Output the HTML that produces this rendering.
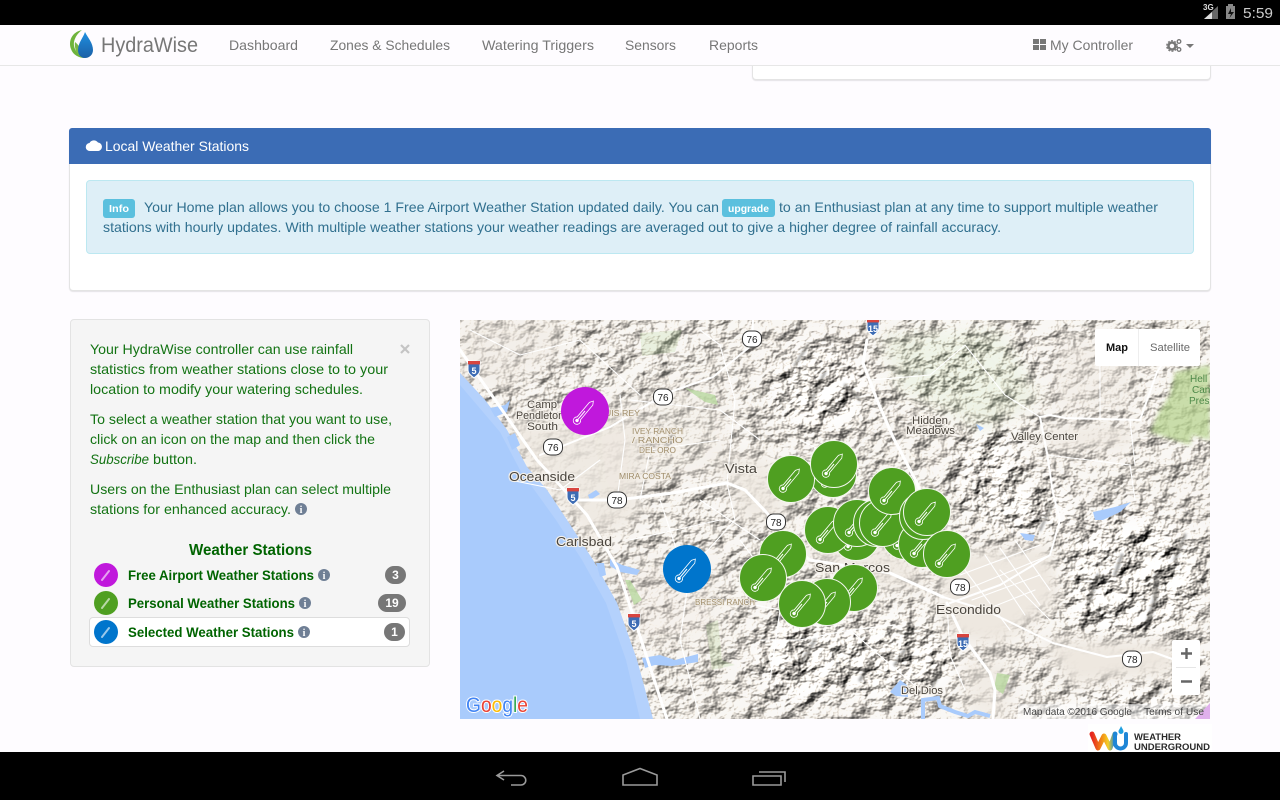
<!DOCTYPE html>
<html lang="en"><head><meta charset="utf-8"><title>HydraWise</title>
<style>
html,body{margin:0;padding:0;width:1280px;height:800px;overflow:hidden;background:#fefcff;font-family:"Liberation Sans",sans-serif}
.a{position:absolute;box-sizing:border-box}
svg{position:absolute;overflow:hidden}
#over text{font-family:"Liberation Sans",sans-serif}
#map text{font-family:"Liberation Sans",sans-serif}
.l{fill:#4a453e;stroke:#f4f0ea;stroke-width:2.2px;paint-order:stroke;stroke-linejoin:round}
.t{fill:#a08e6c;font-size:8px;stroke:#f1ece4;stroke-width:1.5px;paint-order:stroke}
</style></head><body>
<div class="a" style="left:0;top:0;width:1280px;height:25px;background:#000"></div>
<div class="a" style="left:752px;top:60px;width:459px;height:20px;background:#fff;border:1px solid #e4e4e4;border-top:0;border-radius:0 0 4px 4px;box-shadow:0 1px 1px rgba(0,0,0,.1)"></div>
<div class="a" style="left:0;top:25px;width:1280px;height:41px;background:#fefcff;border-bottom:1px solid #e7e7e7"></div>
<div class="a" style="left:69px;top:128px;width:1142px;height:163px;background:#fff;border:1px solid #e4e4e4;border-radius:4px;box-shadow:0 1px 1px rgba(0,0,0,.1)"></div>
<div class="a" style="left:69px;top:128px;width:1142px;height:36px;background:#3b6cb5;border-radius:3px 3px 0 0"></div>
<div class="a" style="left:86px;top:180px;width:1108px;height:74px;background:#deeff7;border:1px solid #bce8f1;border-radius:4px"></div>
<div class="a" style="left:103px;top:199px;width:32px;height:19px;background:#5bc0de;border-radius:3px"></div>
<div class="a" style="left:722px;top:199px;width:53px;height:18px;background:#5bc0de;border-radius:3px"></div>
<div class="a" style="left:70px;top:319px;width:360px;height:348px;background:#f5f5f5;border:1px solid #e3e3e3;border-radius:4px"></div>
<div class="a" style="left:89px;top:617px;width:321px;height:30px;background:#fff;border:1px solid #ddd;border-radius:4px"></div>
<div class="a" style="left:385px;top:566px;width:21px;height:18px;background:#777;border-radius:9px"></div>
<div class="a" style="left:378px;top:594px;width:28px;height:18px;background:#777;border-radius:9px"></div>
<div class="a" style="left:384px;top:623px;width:21px;height:18px;background:#777;border-radius:9px"></div>

<svg id="map" style="left:460px;top:320px" width="750" height="399" viewBox="460 320 750 399">
<defs>
<filter id="hill" x="0" y="0" width="100%" height="100%" color-interpolation-filters="sRGB">
<feTurbulence type="fractalNoise" baseFrequency="0.045 0.055" numOctaves="4" seed="11" result="n"/>
<feDiffuseLighting in="n" surfaceScale="6.5" diffuseConstant="1.42" lighting-color="#f0eae2"><feDistantLight azimuth="225" elevation="45"/></feDiffuseLighting>
</filter>
<filter id="b8"><feGaussianBlur stdDeviation="8"/></filter>
<filter id="b14"><feGaussianBlur stdDeviation="14"/></filter>
<filter id="b2"><feGaussianBlur stdDeviation="2"/></filter>
<filter id="b1"><feGaussianBlur stdDeviation="1"/></filter>
<mask id="tm" maskUnits="userSpaceOnUse" x="460" y="320" width="750" height="399">
<rect x="460" y="320" width="750" height="399" fill="#a4a4a4"/>
<g filter="url(#b14)" fill="#fff">
<ellipse cx="1130" cy="580" rx="75" ry="65"/><ellipse cx="890" cy="660" rx="70" ry="40"/><ellipse cx="800" cy="660" rx="45" ry="45"/><ellipse cx="820" cy="390" rx="50" ry="45"/><ellipse cx="1020" cy="510" rx="55" ry="25"/>
<ellipse cx="960" cy="370" rx="60" ry="35"/><ellipse cx="1140" cy="705" rx="70" ry="16"/><ellipse cx="990" cy="470" rx="35" ry="40"/>
</g>
<g filter="url(#b8)" fill="#000">
<path d="M935 555L1050 545 1060 600 1000 645 950 640Z"/><path d="M1040 640L1170 640 1180 672 1070 685Z" />
<path d="M1045 425L1135 425 1130 448 1050 450Z" opacity=".8"/><path d="M460 320L560 320 565 350 500 390 460 375Z" opacity=".5"/>
<path d="M500 420L640 420 640 520 590 540 530 470Z" opacity=".85"/><path d="M600 400L720 380 730 470 610 490Z" opacity=".35"/>
<path d="M720 455L770 460 790 520 740 520Z" opacity=".8"/><path d="M795 540L900 545 930 590 850 585Z" opacity=".8"/>
<path d="M1060 340L1140 340 1130 410 1050 410Z" opacity=".45"/><path d="M590 560L720 550 720 640 640 650Z" opacity=".3"/>
<path d="M960 660L1010 660 1010 719 970 719Z" opacity=".7"/>
</g>
</mask>
<g id="th"><path d="M-2.2 9.6V-9.5L0-13 2.2-9.5V9.6A3.7 3.700 0 1 1-2.2 9.6Z" fill="none" stroke="#fff" stroke-width=".8"/><path d="M0 13V0" stroke="#fff" stroke-width="1"/><circle cx="0" cy="12.4" r="1.700" fill="#fff"/></g>
<g id="g"><circle r="23.5" fill="#4f9f21" stroke="#f3f7ee" stroke-width="1"/><use href="#th" transform="rotate(40)"/></g>
<g id="s5"><path d="M-6-8H6V1C6 5 2 7 0 9-2 7-6 5-6 1Z" fill="#3d6cb4" stroke="#fff"/><rect x="-6" y="-8" width="12" height="3.4" fill="#d8453f"/></g>
<g id="sr"><rect x="-9.5" y="-8" width="19" height="16" rx="7" fill="#fff" stroke="#333" stroke-width="1"/></g>
</defs>
<rect x="460" y="320" width="750" height="399" fill="#eee8e0"/>
<g mask="url(#tm)"><rect x="460" y="320" width="750" height="399" filter="url(#hill)"/></g>
<g fill="none" stroke="#5c5a56" stroke-linecap="round" filter="url(#b1)" opacity=".6"><path d="M1147 625L1155 600 1157 575" stroke-width="4"/><path d="M1115 575L1122 555M1090 600L1098 575M1175 560L1185 535" stroke-width="3"/><path d="M895 665L905 650M860 680L872 662M930 690L940 672M802 662L815 640M1010 690L1018 672" stroke-width="3"/><path d="M812 400L825 372M845 385L860 400M1040 530L1052 505M795 365L808 345M895 372L925 373M1140 700L1160 692" stroke-width="2.500"/></g>
<g fill="#cfe0bb" opacity=".3" filter="url(#b8)"><path d="M880 335L1000 330 1040 400 985 430 900 390Z"/></g>
<g fill="#b9d592" opacity=".75"><path d="M1175 372L1210 365V440L1192 435 1190 445 1150 432 1160 410 1170 395Z" filter="url(#b2)"/></g>
<g fill="#b9d9a0" opacity=".8"><path d="M997 673L1010 675 1003 694 994 688Z"/><path d="M640 333L682 330 675 352 642 356 Z" opacity=".3"/><path d="M685 388L715 395 718 405 705 402Z"/><path d="M625 580L634 605 642 600 630 580Z"/><path d="M706 625L718 620 722 660 735 665 712 670Z" opacity=".35"/></g>
<!-- ocean -->
<path d="M460 373L485 400 507 430 527 467 547 490 567 520 593 560 617 603 637 660 653 719H460Z" fill="#a9cbfc"/>
<path d="M460 373L485 400 507 430 527 467 547 490 567 520 593 560 617 603 637 660 653 719H640L626 660 606 603 582 560 556 520 520 470 500 432 460 385Z" fill="#b4d1fc"/>
<!-- water -->
<g fill="#a9cbfc"><path d="M610 559L622 565 640 570 637 575 620 572 610 566Z"/><path d="M596 563L604 563 606 575 600 577Z"/><path d="M642 658L660 655 675 660 698 654 698 662 672 666 655 665 645 668Z"/><path d="M490 408L505 405 510 400 507 412 495 417Z"/><path d="M507 437L515 433 520 445 512 450Z"/><path d="M890 692L900 680 907 685 908 697 896 696Z"/><path d="M1093 512L1115 507 1131 502 1120 512 1103 520 1095 520Z"/><path d="M1020 533L1035 535 1033 541 1025 540Z"/><path d="M976 424L984 428 980 431Z"/><path d="M588 495L596 490 600 494 590 500Z"/></g>
<path d="M923 719V700L938 698 940 706 955 712 968 716 975 712 990 716" fill="none" stroke="#a9cbfc" stroke-width="4"/>
<!-- roads -->
<g fill="none" stroke="#fff" stroke-linecap="round" stroke-linejoin="round">
<g stroke-width="3"><path d="M867 340L863 363 877 400 893 437 917 483 930 520"/><path d="M947 603L963 637 990 673 995 690 993 719"/><path d="M460 350L493 397 537 460 587 515 617 567 637 627 667 719"/><path d="M575 500L617 500 673 493 727 483 745 490 767 513 795 548 810 560 890 573 943 597"/></g>
<g stroke-width="2"><path d="M943 597L985 610 1053 643 1107 657 1153 652 1175 660 1205 657"/><path d="M540 455L610 427 667 393 713 377 752 345 753 320"/><path d="M1040 417L1050 415 1065 418 1140 420 1157 372 1165 360"/><path d="M1040 417L1047 453 1053 493 1060 520 1050 555 1000 585 950 603"/></g>
<g stroke-width="1.100"><path d="M1047 455L1130 465 1135 500M1130 420L1135 465"/><path d="M870 380L930 375 965 345 1005 395 1040 417"/><path d="M617 500L625 440 620 395M735 400L727 483 735 520 690 570 680 640 700 719"/><path d="M947 603L950 655 965 690M1050 620L1000 570"/><path d="M895 625L850 630 800 640 760 640M850 630L920 690"/><path d="M960 575L1040 545M965 590L1050 555M972 600L1040 575M980 612L1035 590M985 555L1025 615M1000 548L1040 605M1015 540L1050 590M965 570L1010 630"/><path d="M470 330L520 355 580 340 640 395M630 400L720 410 760 440M640 500L650 450 720 440M660 500L680 560M700 500L760 540M730 600L780 610 770 680M510 480L560 490 600 460M700 330L720 345 735 400M1100 350V420M800 440L860 470M630 540L720 520M740 540L800 620"/></g>
</g>
<!-- shields -->
<g font-size="10" text-anchor="middle" fill="#222">
<use href="#sr" x="663" y="397"/><text x="663" y="401">76</text>
<use href="#sr" x="752" y="339"/><text x="752" y="343">76</text>
<use href="#sr" x="553" y="447"/><text x="553" y="451">76</text>
<use href="#sr" x="617" y="500"/><text x="617" y="504">78</text>
<use href="#sr" x="776" y="522"/><text x="776" y="526">78</text>
<use href="#sr" x="960" y="587"/><text x="960" y="591">78</text>
<use href="#sr" x="1132" y="659"/><text x="1132" y="663">78</text>
<g font-weight="bold"><use href="#s5" x="474" y="369"/><text x="474" y="374" font-size="9" fill="#fff">5</text>
<use href="#s5" x="573" y="496"/><text x="573" y="501" font-size="9" fill="#fff">5</text>
<use href="#s5" x="634" y="622"/><text x="634" y="627" font-size="9" fill="#fff">5</text>
<use href="#s5" x="873" y="327"/><text x="873" y="332" font-size="9" fill="#fff">15</text>
<use href="#s5" x="963" y="642"/><text x="963" y="647" font-size="9" fill="#fff">15</text></g>
</g>
<!-- labels -->
<g>
<text class="l" x="527" y="408" font-size="11" textLength="30" lengthAdjust="spacingAndGlyphs">Camp</text>
<text class="l" x="516" y="419" font-size="11" textLength="48" lengthAdjust="spacingAndGlyphs">Pendleton</text>
<text class="l" x="527" y="430" font-size="11" textLength="31" lengthAdjust="spacingAndGlyphs">South</text>
<text class="l" x="509" y="481" font-size="13" textLength="66" lengthAdjust="spacingAndGlyphs">Oceanside</text>
<text class="l" x="725" y="473" font-size="13" textLength="32" lengthAdjust="spacingAndGlyphs">Vista</text>
<text class="l" x="556" y="546" font-size="13" textLength="56" lengthAdjust="spacingAndGlyphs">Carlsbad</text>
<text class="l" x="912" y="424" font-size="11" textLength="36" lengthAdjust="spacingAndGlyphs">Hidden</text>
<text class="l" x="906" y="434" font-size="11" textLength="49" lengthAdjust="spacingAndGlyphs">Meadows</text>
<text class="l" x="1011" y="440" font-size="11" textLength="67" lengthAdjust="spacingAndGlyphs">Valley Center</text>
<text class="l" x="815" y="572" font-size="13" textLength="75" lengthAdjust="spacingAndGlyphs">San Marcos</text>
<text class="l" x="936" y="614" font-size="13" textLength="65" lengthAdjust="spacingAndGlyphs">Escondido</text>
<text class="l" x="901" y="694" font-size="11" textLength="42" lengthAdjust="spacingAndGlyphs">Del Dios</text>
<text class="t" x="600" y="416" textLength="40" lengthAdjust="spacingAndGlyphs">LUIS REY</text>
<text class="t" x="632" y="434" textLength="51" lengthAdjust="spacingAndGlyphs">IVEY RANCH</text>
<text class="t" x="632" y="443" textLength="51" lengthAdjust="spacingAndGlyphs">/ RANCHO</text>
<text class="t" x="639" y="453" textLength="37" lengthAdjust="spacingAndGlyphs">DEL ORO</text>
<text class="t" x="619" y="479" textLength="52" lengthAdjust="spacingAndGlyphs">MIRA COSTA</text>
<text class="t" x="695" y="605" textLength="60" lengthAdjust="spacingAndGlyphs">BRESSI RANCH</text>
<g font-size="10" fill="#4f8a4a"><text x="1190" y="382">Hell</text><text x="1192" y="393">Can</text><text x="1189" y="404">Pres</text></g>
</g>
<!-- markers -->
<circle cx="585" cy="411" r="24" fill="#c018dc"/><use href="#th" transform="translate(585 411) rotate(40)"/>
<circle cx="687" cy="569" r="24" fill="#0075cc"/><use href="#th" transform="translate(687 569) rotate(40)"/>
<use href="#g" x="833" y="474"/><use href="#g" x="791" y="479"/><use href="#g" x="834" y="464"/>
<use href="#g" x="856" y="537"/><use href="#g" x="828" y="530"/><use href="#g" x="857" y="523"/><use href="#g" x="905" y="536"/><use href="#g" x="877" y="523"/><use href="#g" x="883" y="523"/><use href="#g" x="892" y="491"/><use href="#g" x="922" y="544"/><use href="#g" x="923" y="516"/><use href="#g" x="927" y="512"/><use href="#g" x="947" y="554"/>
<use href="#g" x="783" y="554"/><use href="#g" x="763" y="578"/><use href="#g" x="854" y="588"/><use href="#g" x="827" y="602"/><use href="#g" x="802" y="604"/>
<!-- controls -->
<rect x="1095" y="329" width="105" height="37" rx="2" fill="#fff"/><path d="M1138.500 329V366" stroke="#eee"/>
<text x="1106" y="351" font-size="11" font-weight="bold" fill="#111" textLength="22" lengthAdjust="spacingAndGlyphs">Map</text>
<text x="1150" y="351" font-size="11" fill="#6a6a6a" textLength="40" lengthAdjust="spacingAndGlyphs">Satellite</text>
<rect x="1172" y="640" width="28" height="55" rx="2" fill="#fff"/><path d="M1176 667.500H1196" stroke="#e6e6e6"/>
<path d="M1181 653.500H1192M1186.500 648V659M1181 681.500H1192" stroke="#666" stroke-width="2.400" fill="none"/>
<rect x="1018" y="704" width="192" height="15" fill="#fff" opacity=".55"/><path d="M1195 719L1210 703V719Z" fill="#e0b0ec"/>
<text x="1023" y="715" font-size="10" fill="#444" textLength="109" lengthAdjust="spacingAndGlyphs">Map data ©2016 Google</text>
<text x="1144" y="715" font-size="10" fill="#444" textLength="60" lengthAdjust="spacingAndGlyphs">Terms of Use</text>
<text x="466" y="712" font-size="21" stroke="#fff" stroke-width="2" paint-order="stroke" textLength="62" lengthAdjust="spacingAndGlyphs"><tspan fill="#4285f4">G</tspan><tspan fill="#ea4335">o</tspan><tspan fill="#fbbc05">o</tspan><tspan fill="#4285f4">g</tspan><tspan fill="#34a853">l</tspan><tspan fill="#ea4335">e</tspan></text>
</svg>

<svg id="over" style="left:0;top:0" width="1280" height="800" viewBox="0 0 1280 800">
<defs><linearGradient id="wu" x1="0" x2="1" y1="0" y2="0"><stop offset="0" stop-color="#e5261f"/><stop offset=".45" stop-color="#f29216"/><stop offset=".7" stop-color="#f5cf26"/><stop offset="1" stop-color="#1f86d6"/></linearGradient>
<linearGradient id="dr" x1="0" y1="0" x2="0" y2="1"><stop offset="0" stop-color="#1e90e0"/><stop offset="1" stop-color="#1c5fa6"/></linearGradient></defs>
<!-- bars -->
<rect x="0" y="752" width="1280" height="48" fill="#000"/>
<rect x="1088" y="724" width="124" height="28" fill="#fff"/>
<g fill="none" stroke="#9a9a9a" stroke-width="1.600"><path d="M504 771L497 775.500 504 780M497 775.500H521A4 4 0 0 1 521 785H511"/><path d="M623 785V775L640 768.500 657 775V785Z"/><path d="M753 776H781V785H753ZM759 772H785V782"/></g>
<!-- status -->
<text x="1203" y="10" font-size="8" font-weight="bold" fill="#ddd">3G</text>
<path d="M1204 19L1218 6V19Z" fill="#666"/><path d="M1204 19L1212 12V19Z" fill="#ddd"/>
<rect x="1226" y="6" width="9" height="13" fill="#888"/><rect x="1228" y="4" width="5" height="2" fill="#888"/><path d="M1231 8L1228 14H1231L1229.500 18 1234 12H1231Z" fill="#111"/>
<text x="1243" y="18" font-size="15" fill="#ccc" textLength="30" lengthAdjust="spacingAndGlyphs">5:59</text>
<!-- nav -->
<path d="M82 30C72 32 68 41 71 49 73 55 79 58 85 58 78 55 73 49 74 42 75 37 78 33 82 30Z" fill="#6fb43c"/>
<path d="M75 42C79 45 82 50 82 57 77 56 74 48 75 42Z" fill="#7ab648"/>
<path d="M85 32C88 38 93 43 93 50 93 55 89 58 85 58 81 58 78 55 78 50 78 43 83 38 85 32Z" fill="url(#dr)"/>
<g fill="#777" font-size="14">
<text x="101" y="52" font-size="21" textLength="97" lengthAdjust="spacingAndGlyphs">HydraWise</text>
<text x="229" y="50" textLength="69" lengthAdjust="spacingAndGlyphs">Dashboard</text>
<text x="330" y="50" textLength="120" lengthAdjust="spacingAndGlyphs">Zones &amp; Schedules</text>
<text x="482" y="50" textLength="112" lengthAdjust="spacingAndGlyphs">Watering Triggers</text>
<text x="625" y="50" textLength="51" lengthAdjust="spacingAndGlyphs">Sensors</text>
<text x="709" y="50" textLength="49" lengthAdjust="spacingAndGlyphs">Reports</text>
<text x="1050" y="50" textLength="83" lengthAdjust="spacingAndGlyphs">My Controller</text>
<path d="M1033 39h6v5h-6zM1040 39h6v5h-6zM1033 45h6v5h-6zM1040 45h6v5h-6z"/>
<circle cx="1172" cy="46" r="3.500" fill="none" stroke="#777" stroke-width="2.500"/><circle cx="1172" cy="46" r="5.300" fill="none" stroke="#777" stroke-width="1.200" stroke-dasharray="2 1.400"/>
<circle cx="1179" cy="41.500" r="1.800" fill="none" stroke="#777" stroke-width="1.300"/><circle cx="1179" cy="49.500" r="1.800" fill="none" stroke="#777" stroke-width="1.300"/>
<path d="M1186 44H1194L1190 48Z"/>
</g>
<!-- panel heading -->
<path d="M90 151A4 4 0 0 1 89.500 143 5 5 0 0 1 98 142.500 4.300 4.300 0 0 1 98.500 151Z" fill="#fff"/>
<text x="105" y="151" font-size="14" fill="#fff" textLength="144" lengthAdjust="spacingAndGlyphs">Local Weather Stations</text>
<!-- alert -->
<g fill="#31708f" font-size="14">
<text x="144" y="212" textLength="575" lengthAdjust="spacingAndGlyphs">Your Home plan allows you to choose 1 Free Airport Weather Station updated daily. You can</text>
<text x="779" y="212" textLength="379" lengthAdjust="spacingAndGlyphs">to an Enthusiast plan at any time to support multiple weather</text>
<text x="103" y="232" textLength="898" lengthAdjust="spacingAndGlyphs">stations with hourly updates. With multiple weather stations your weather readings are averaged out to give a higher degree of rainfall accuracy.</text>
</g>
<text x="109" y="212" font-size="10.500" font-weight="bold" fill="#fff" textLength="20" lengthAdjust="spacingAndGlyphs">Info</text>
<text x="728" y="212" font-size="10.500" font-weight="bold" fill="#fff" textLength="41" lengthAdjust="spacingAndGlyphs">upgrade</text>
<!-- well -->
<g fill="#137313" font-size="14">
<text x="90" y="354" textLength="263" lengthAdjust="spacingAndGlyphs">Your HydraWise controller can use rainfall</text>
<text x="90" y="374" textLength="298" lengthAdjust="spacingAndGlyphs">statistics from weather stations close to to your</text>
<text x="90" y="394" textLength="273" lengthAdjust="spacingAndGlyphs">location to modify your watering schedules.</text>
<text x="90" y="424" textLength="302" lengthAdjust="spacingAndGlyphs">To select a weather station that you want to use,</text>
<text x="90" y="444" textLength="285" lengthAdjust="spacingAndGlyphs">click on an icon on the map and then click the</text>
<text x="90" y="464" font-style="italic" textLength="59" lengthAdjust="spacingAndGlyphs">Subscribe</text>
<text x="153" y="464" textLength="44" lengthAdjust="spacingAndGlyphs">button.</text>
<text x="90" y="494" textLength="301" lengthAdjust="spacingAndGlyphs">Users on the Enthusiast plan can select multiple</text>
<text x="90" y="514" textLength="201" lengthAdjust="spacingAndGlyphs">stations for enhanced accuracy.</text>
</g>
<path d="M401 345L409 353M409 345L401 353" stroke="#c4c4c4" stroke-width="2.200"/>
<g fill="#006400" font-weight="bold">
<text x="189" y="555" font-size="16" textLength="123" lengthAdjust="spacingAndGlyphs">Weather Stations</text>
<text x="128" y="580" font-size="14" textLength="186" lengthAdjust="spacingAndGlyphs">Free Airport Weather Stations</text>
<text x="128" y="608" font-size="14" textLength="167" lengthAdjust="spacingAndGlyphs">Personal Weather Stations</text>
<text x="128" y="637" font-size="14" textLength="166" lengthAdjust="spacingAndGlyphs">Selected Weather Stations</text>
</g>
<g fill="#6f7f95">
<circle cx="301" cy="509" r="6"/><circle cx="324" cy="575" r="6"/><circle cx="305" cy="603" r="6"/><circle cx="304" cy="632" r="6"/>
</g>
<g fill="#fff" font-size="10" font-weight="bold" text-anchor="middle"><text x="301" y="513" style="font-family:'Liberation Serif',serif">i</text><text x="324" y="579" style="font-family:'Liberation Serif',serif">i</text><text x="305" y="607" style="font-family:'Liberation Serif',serif">i</text><text x="304" y="636" style="font-family:'Liberation Serif',serif">i</text></g>
<g fill="#fff" font-size="12" font-weight="bold" text-anchor="middle"><text x="395.500" y="579">3</text><text x="392" y="607">19</text><text x="394.500" y="636">1</text></g>
<circle cx="106" cy="575" r="12" fill="#c018dc"/><circle cx="106" cy="603" r="12" fill="#4f9f21"/><circle cx="106" cy="632" r="12" fill="#0075cc"/>
<g stroke="#fff" stroke-opacity=".6" stroke-width="2" stroke-linecap="round"><path d="M102 580L109 571M102 608L109 599M102 637L109 628"/></g>
<!-- WU logo -->
<path d="M1092 734L1098 748 1104 736 1110 748 1115 734" fill="none" stroke="url(#wu)" stroke-width="5" stroke-linejoin="round" stroke-linecap="round"/>
<path d="M1115 734V743A5.500 5.500 0 0 0 1126 743V734" fill="none" stroke="#1f86d6" stroke-width="4" stroke-linecap="round"/>
<path d="M1121 726C1122.500 729 1123.500 730 1123.500 731.500A2.500 2.500 0 0 1 1118.500 731.500C1118.500 730 1120 729 1121 726Z" fill="#1f9fe0"/>
<text x="1134" y="740" font-size="9" font-weight="bold" fill="#2a2a2a" textLength="47" lengthAdjust="spacingAndGlyphs">WEATHER</text>
<text x="1134" y="750" font-size="9" font-weight="bold" fill="#2a2a2a" textLength="76" lengthAdjust="spacingAndGlyphs">UNDERGROUND</text>
</svg>
</body></html>
